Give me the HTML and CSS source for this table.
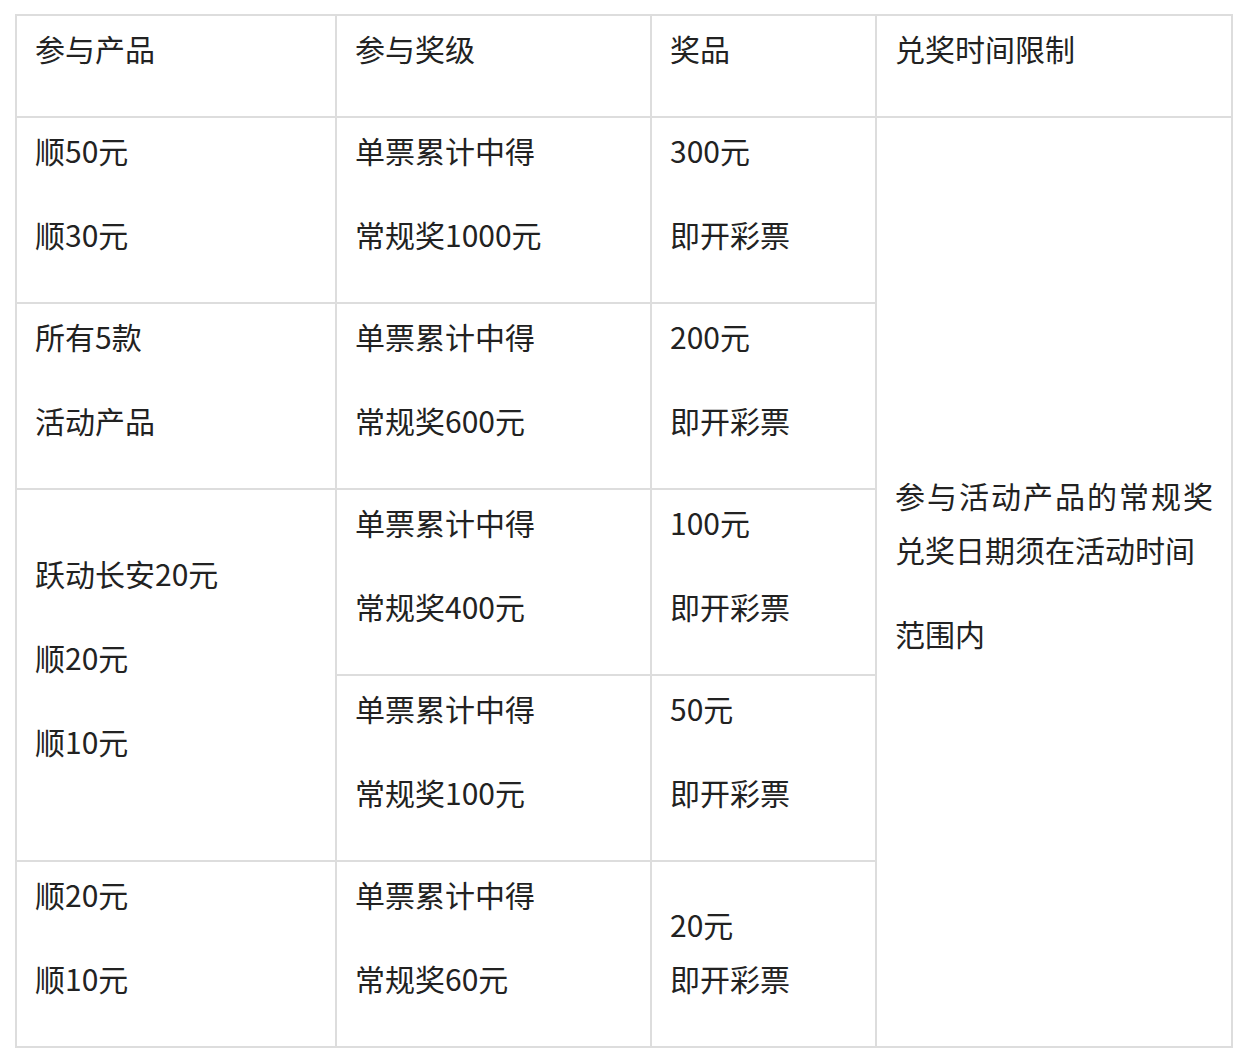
FILE: index.html
```html
<!DOCTYPE html>
<html lang="zh-CN">
<head>
<meta charset="utf-8">
<title>兑奖规则</title>
<link rel="stylesheet" href="styles.css">
</head>
<body>
<table class="prize-table">
  <colgroup>
    <col class="c1">
    <col class="c2">
    <col class="c3">
    <col class="c4">
  </colgroup>
  <thead>
    <tr>
      <th><p>参与产品</p></th>
      <th><p>参与奖级</p></th>
      <th><p>奖品</p></th>
      <th><p>兑奖时间限制</p></th>
    </tr>
  </thead>
  <tbody>
    <tr>
      <td><p>顺50元</p><p>顺30元</p></td>
      <td><p>单票累计中得</p><p>常规奖1000元</p></td>
      <td><p>300元</p><p>即开彩票</p></td>
      <td rowspan="5"><p>参与活动产品的常规奖兑奖日期须在活动时间</p><p>范围内</p></td>
    </tr>
    <tr>
      <td><p>所有5款</p><p>活动产品</p></td>
      <td><p>单票累计中得</p><p>常规奖600元</p></td>
      <td><p>200元</p><p>即开彩票</p></td>
    </tr>
    <tr>
      <td rowspan="2"><p>跃动长安20元</p><p>顺20元</p><p>顺10元</p></td>
      <td><p>单票累计中得</p><p>常规奖400元</p></td>
      <td><p>100元</p><p>即开彩票</p></td>
    </tr>
    <tr>
      <td><p>单票累计中得</p><p>常规奖100元</p></td>
      <td><p>50元</p><p>即开彩票</p></td>
    </tr>
    <tr>
      <td><p>顺20元</p><p>顺10元</p></td>
      <td><p>单票累计中得</p><p>常规奖60元</p></td>
      <td>20元<br>即开彩票</td>
    </tr>
  </tbody>
</table>
</body>
</html>
```

FILE: styles.css
```css
html, body {
  margin: 0;
  padding: 0;
  background: #ffffff;
}

body {
  padding: 14px 0 0 15px;
  font-family: "Noto Sans CJK SC", "Noto Sans", sans-serif;
  font-size: 30px;
  line-height: 54px;
  color: #222222;
}

.prize-table {
  border-collapse: collapse;
  table-layout: fixed;
  width: 1218px;
}

.c1 { width: 320px; }
.c2 { width: 315px; }
.c3 { width: 225px; }
.c4 { width: 356px; }

.prize-table th,
.prize-table td {
  border: 2px solid #dddddd;
  padding: 5px 18px 11px;
  vertical-align: middle;
  text-align: justify;
  font-weight: normal;
}

.prize-table p {
  margin: 0 0 30px;
}
```
